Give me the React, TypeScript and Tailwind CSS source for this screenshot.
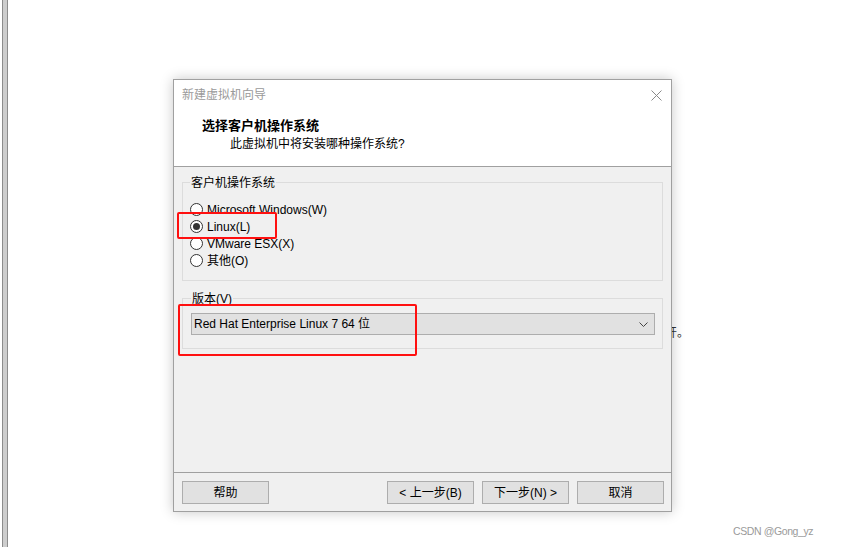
import { ReactNode } from "react";

const font = { fontFamily: '"Liberation Sans", "Noto Sans CJK SC", sans-serif' };

const osOptions = [
  { label: "Microsoft Windows(W)", checked: false },
  { label: "Linux(L)", checked: true },
  { label: "VMware ESX(X)", checked: false },
  { label: "其他(O)", checked: false },
];

function Radio({ label, checked }: { label: string; checked: boolean }) {
  return (
    <div className="flex items-center h-[17px] gap-[4px]">
      <span className="w-[13px] h-[13px] rounded-full border border-[#333] bg-white flex items-center justify-center">
        {checked && <span className="w-[7px] h-[7px] rounded-full bg-[#333]" />}
      </span>
      <span className="text-[12px] leading-[16px] text-black">{label}</span>
    </div>
  );
}

function Group({ title, children, className }: { title: string; children: ReactNode; className?: string }) {
  return (
    <fieldset className={`border border-[#dcdcdc] mx-[8px] ${className ?? ""}`}>
      <legend className="px-[1px] text-[12px] leading-[16px] text-black">
        <span className="relative top-[1px]">{title}</span>
      </legend>
      {children}
    </fieldset>
  );
}

function Button({ children }: { children: ReactNode }) {
  return (
    <button className="w-[87px] h-[23px] border border-[#adadad] bg-[#e1e1e1] text-[12px] leading-[16px] text-black">
      {children}
    </button>
  );
}

export default function App() {
  return (
    <div className="relative w-[844px] h-[547px] bg-white overflow-hidden flex" style={font}>
      {/* left edge of the window behind */}
      <div className="ml-[2px] w-[6px] h-full border-l border-r border-[#8c8c8c] bg-[#cdcdcd]" />

      {/* text of the page behind, partly under the dialog */}
      <span className="absolute left-[665px] top-[325px] text-[12px] leading-[16px] text-[#333]">开。</span>

      {/* wizard dialog */}
      <div className="relative z-10 ml-[165px] mt-[79px] w-[499px] h-[433px] border border-[#a0a0a0] bg-[#f0f0f0] shadow-[0_0_12px_rgba(0,0,0,0.22)] flex flex-col">
        <div className="h-[87px] bg-white border-b border-[#a0a0a0]">
          <div className="flex items-start justify-between pt-[7px] pl-[8px] pr-[9px]">
            <span className="text-[12px] leading-[16px] text-[#9a9a9a]">新建虚拟机向导</span>
            <svg width="11" height="11" viewBox="0 0 11 11" className="mt-[3px]">
              <path d="M0.5 0.5L10.5 10.5M10.5 0.5L0.5 10.5" stroke="#8a8a8a" strokeWidth="1" />
            </svg>
          </div>
          <div className="mt-[15px] pl-[28px] text-[13px] leading-[16px] font-bold text-black">选择客户机操作系统</div>
          <div className="mt-[2px] pl-[56px] text-[12px] leading-[16px] text-black">此虚拟机中将安装哪种操作系统?</div>
        </div>

        <div className="h-[305px]">
          <Group title="客户机操作系统" className="mt-[7px] pt-[11px] pb-[11px] pl-[7px]">
            {osOptions.map((o) => (
              <Radio key={o.label} label={o.label} checked={o.checked} />
            ))}
          </Group>
          <Group title="版本(V)" className="mt-[9px] pt-[7px] pb-[13px] pl-[8px] pr-[7px]">
            <div className="h-[22px] border border-[#adadad] bg-[#e1e1e1] flex items-center justify-between pl-[2px] pr-[6px]">
              <span className="text-[12px] leading-[16px] text-black">Red Hat Enterprise Linux 7 64 位</span>
              <svg width="9" height="5" viewBox="0 0 9 5">
                <path d="M0.5 0.5L4.5 4.5L8.5 0.5" stroke="#444" strokeWidth="1" fill="none" />
              </svg>
            </div>
          </Group>
        </div>

        <div className="h-[39px] border-t border-[#a0a0a0] flex items-start justify-between pt-[8px] pl-[8px] pr-[7px]">
          <Button>帮助</Button>
          <div className="flex gap-[8px]">
            <Button>&lt; 上一步(B)</Button>
            <Button>下一步(N) &gt;</Button>
            <Button>取消</Button>
          </div>
        </div>

        {/* red annotation frames */}
        <div className="absolute left-[3px] top-[132px] w-[100px] h-[27px] border-2 border-[#ff1010] rounded-[2px]" />
        <div className="absolute left-[4px] top-[224px] w-[239px] h-[52px] border-2 border-[#ff1010] rounded-[2px]" />
      </div>

      <span className="absolute left-[733px] bottom-[8px] text-[10.5px] leading-[16px] tracking-[-0.4px] text-[#9a9a9a]">CSDN @Gong_yz</span>
    </div>
  );
}
